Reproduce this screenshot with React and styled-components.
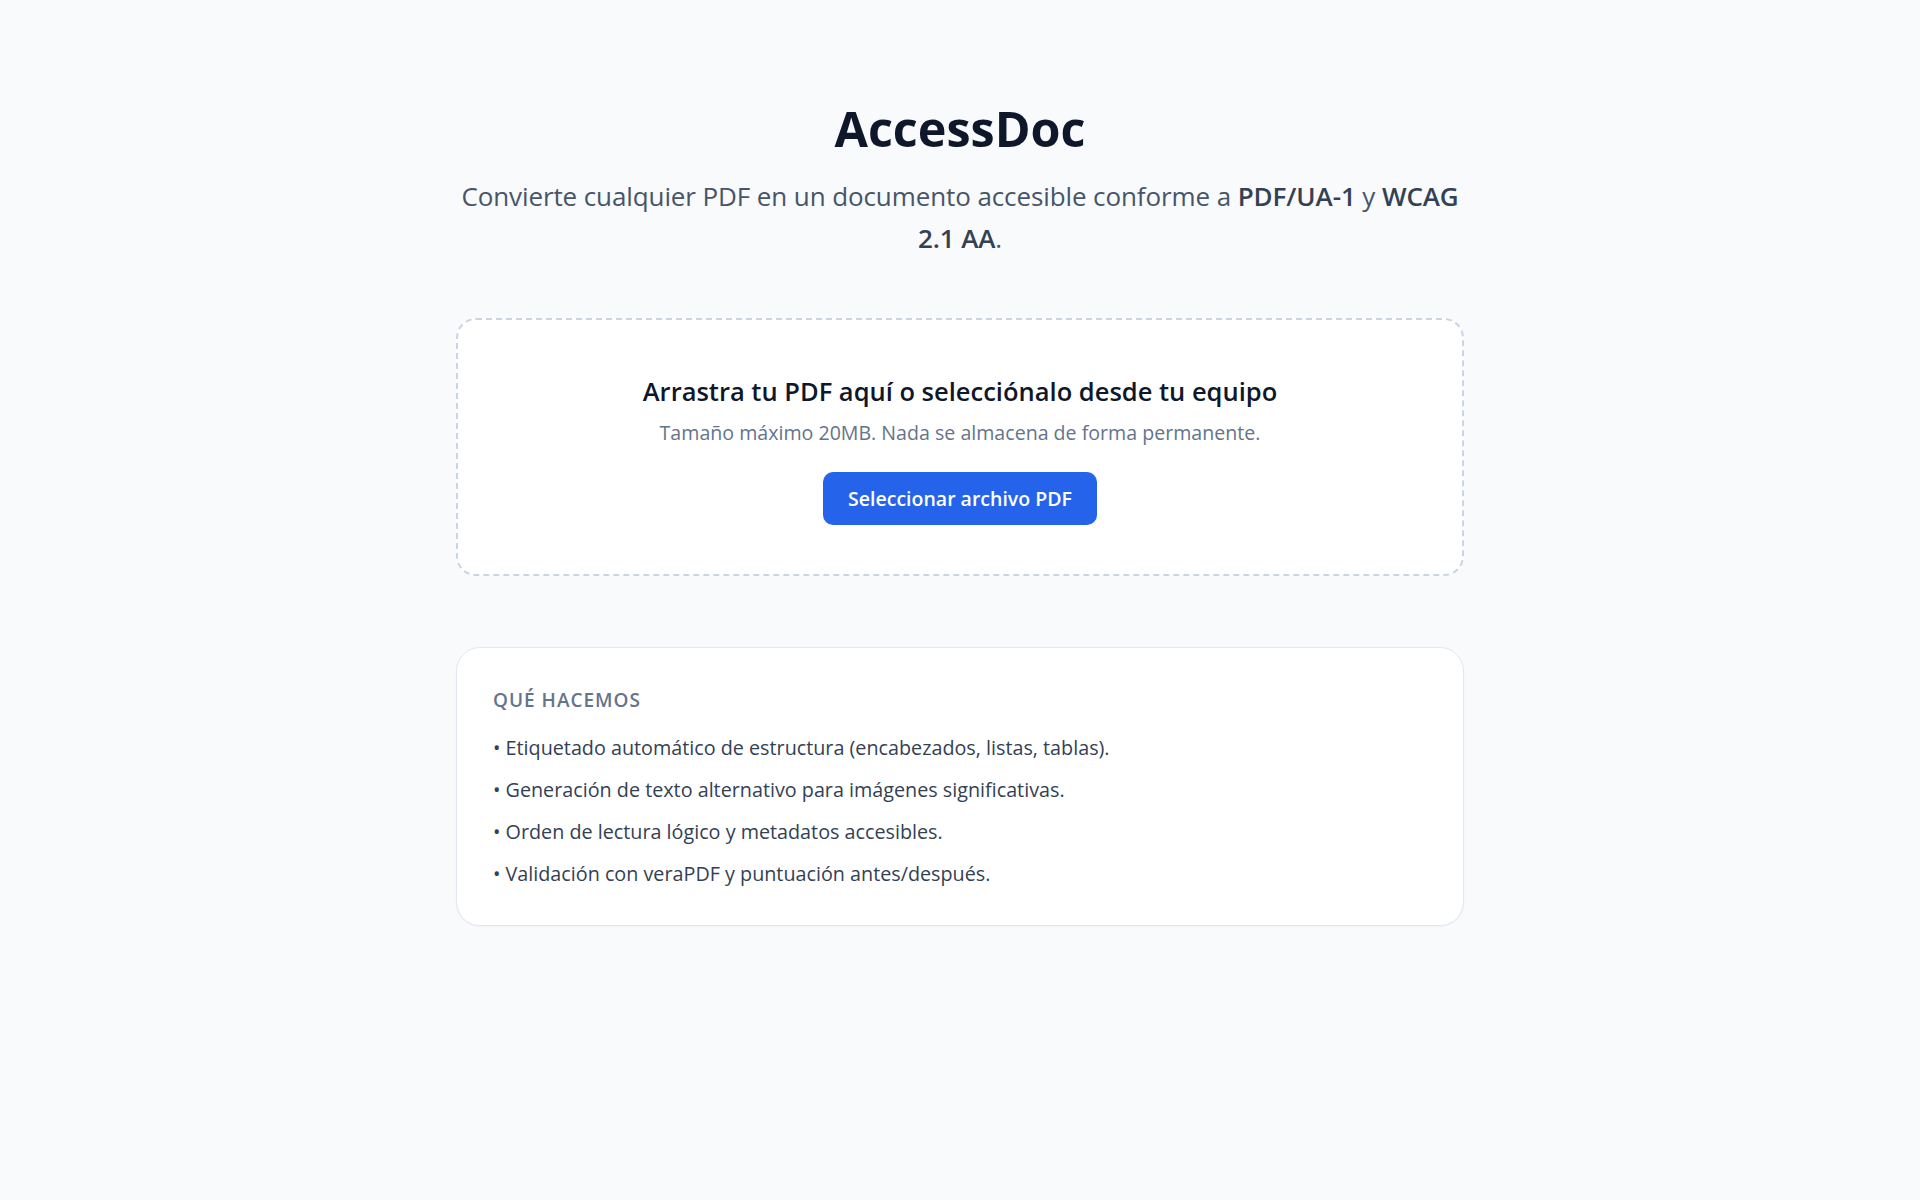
import React from 'react'
import styled, { createGlobalStyle } from 'styled-components'

const GlobalStyle = createGlobalStyle`
    * { box-sizing: border-box; }
    html, body {
        margin: 0;
        padding: 0;
        background: #f8fafc;
        font-family: "Open Sans", "Noto Sans", "Liberation Sans", sans-serif;
        color: #0f172a;
    }
`

const Page = styled.main`
    min-height: 100vh;
    padding: 100px 24px 80px;
    display: flex;
    justify-content: center;
`

const Container = styled.div`
    width: 100%;
    max-width: 1008px;
    display: flex;
    flex-direction: column;
    align-items: stretch;
`

const Header = styled.header`
    text-align: center;
    margin-bottom: 59px;
`

const Title = styled.h1`
    margin: 0 0 19px;
    font-size: 48.5px;
    line-height: 56px;
    font-weight: 700;
    color: #0f172a;
`

const Subtitle = styled.p`
    margin: 0;
    font-size: 26px;
    line-height: 42px;
    letter-spacing: -0.1px;
    color: #475569;

    strong {
        font-weight: 600;
        color: #334155;
    }
`

const DropZone = styled.section`
    border: 2px dashed #cbd5e1;
    border-radius: 20px;
    background: #ffffff;
    padding: 55px 48px 49px;
    display: flex;
    flex-direction: column;
    align-items: center;
    text-align: center;
    margin-bottom: 71px;
`

const DropTitle = styled.h2`
    margin: 0 0 12px;
    font-size: 25.5px;
    line-height: 32px;
    font-weight: 600;
    color: #0f172a;
`

const DropHint = styled.p`
    margin: 0 0 25px;
    font-size: 19.6px;
    line-height: 28px;
    color: #64748b;
`

const PrimaryButton = styled.button`
    height: 53px;
    padding: 0 25px;
    border: none;
    border-radius: 10px;
    background: #2563eb;
    color: #ffffff;
    font-family: inherit;
    font-size: 19.5px;
    font-weight: 600;
    cursor: pointer;
`

const InfoCard = styled.section`
    background: #ffffff;
    border: 1px solid #e2e8f0;
    border-radius: 24px;
    box-shadow: 0 1px 2px rgba(15, 23, 42, 0.04);
    padding: 39px 36px 36px;
`

const CardLabel = styled.h3`
    margin: 0 0 19px;
    font-size: 19px;
    line-height: 27px;
    font-weight: 600;
    letter-spacing: 1px;
    text-transform: uppercase;
    color: #64748b;
`

const List = styled.ul`
    list-style: none;
    margin: 0;
    padding: 0;
    display: flex;
    flex-direction: column;
    gap: 12px;
`

const Item = styled.li`
    font-size: 19.75px;
    line-height: 30px;
    color: #334155;
`

const features = [
    'Etiquetado automático de estructura (encabezados, listas, tablas).',
    'Generación de texto alternativo para imágenes significativas.',
    'Orden de lectura lógico y metadatos accesibles.',
    'Validación con veraPDF y puntuación antes/después.',
]

const App = () => {
    return (
        <>
            <GlobalStyle />
            <Page>
                <Container>
                    <Header>
                        <Title>AccessDoc</Title>
                        <Subtitle>
                            Convierte cualquier PDF en un documento accesible conforme a <strong>PDF/UA-1</strong> y <strong>WCAG</strong> <strong>2.1 AA</strong>.
                        </Subtitle>
                    </Header>

                    <DropZone>
                        <DropTitle>Arrastra tu PDF aquí o selecciónalo desde tu equipo</DropTitle>
                        <DropHint>Tamaño máximo 20MB. Nada se almacena de forma permanente.</DropHint>
                        <PrimaryButton type="button">Seleccionar archivo PDF</PrimaryButton>
                    </DropZone>

                    <InfoCard>
                        <CardLabel>Qué hacemos</CardLabel>
                        <List>
                            {features.map(f => (
                                <Item key={f}>• {f}</Item>
                            ))}
                        </List>
                    </InfoCard>
                </Container>
            </Page>
        </>
    )
}

export default App
